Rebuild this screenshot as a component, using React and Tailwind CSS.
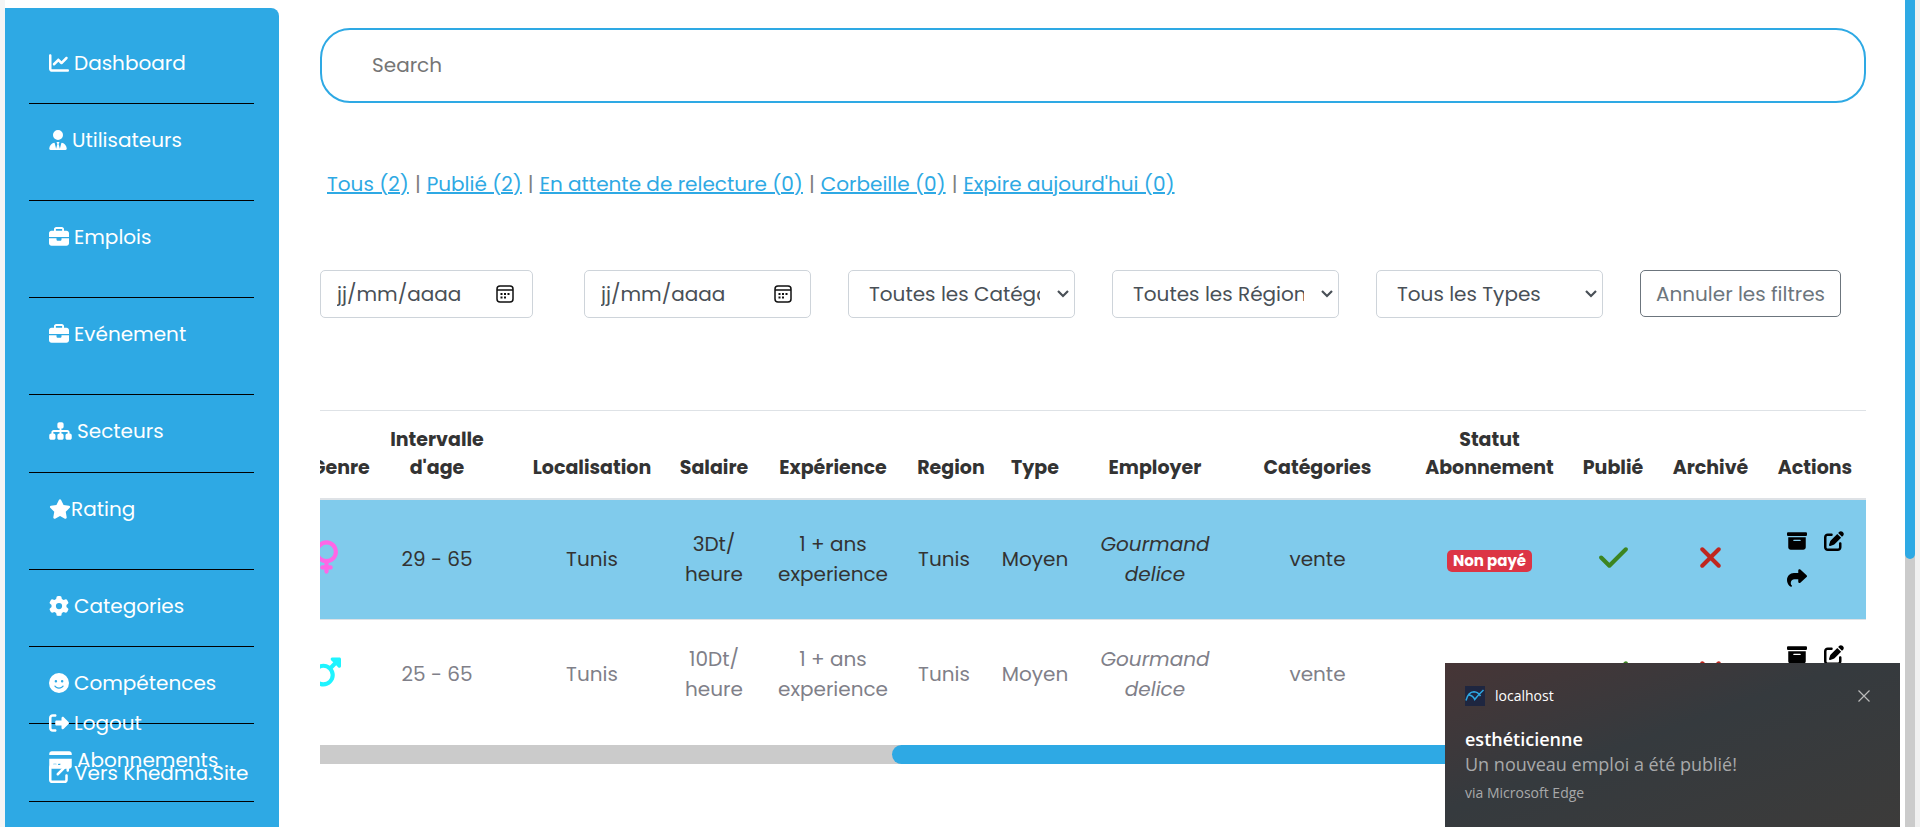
import {
  FaChartLine, FaUserTie, FaBriefcase, FaSitemap, FaStar, FaGear, FaFaceSmile,
  FaRightFromBracket, FaCreditCard, FaArrowUpRightFromSquare, FaVenus, FaMars,
  FaCheck, FaXmark, FaBoxArchive, FaPenToSquare, FaShare,
} from "react-icons/fa6";

const navItems = [
  { label: "Dashboard", Icon: FaChartLine, size: "w-5", gap: "gap-[5px]", height: "h-[77px]" },
  { label: "Utilisateurs", Icon: FaUserTie, size: "w-[18px]", gap: "gap-[5px]", height: "h-[97px]" },
  { label: "Emplois", Icon: FaBriefcase, size: "w-5", gap: "gap-[5px]", height: "h-[97px]" },
  { label: "Evénement", Icon: FaBriefcase, size: "w-5", gap: "gap-[5px]", height: "h-[97px]" },
  { label: "Secteurs", Icon: FaSitemap, size: "w-[23px]", gap: "gap-[5px]", height: "h-[78px]" },
  { label: "Rating", Icon: FaStar, size: "w-[22px]", gap: "gap-0", height: "h-[97px]" },
  { label: "Categories", Icon: FaGear, size: "w-5", gap: "gap-[5px]", height: "h-[77px]" },
  { label: "Compétences", Icon: FaFaceSmile, size: "w-5", gap: "gap-[5px]", height: "h-[77px]" },
  { label: "Abonnements", Icon: FaCreditCard, size: "w-[23px]", gap: "gap-[5px]", height: "h-[78px]" },
];

function NavLink({ label, Icon, size, gap }) {
  return (
    <a href="#" className={`flex items-center pl-5 text-xl leading-[30px] text-white whitespace-nowrap ${gap}`}>
      <Icon className={`h-5 shrink-0 ${size}`} />
      {label}
    </a>
  );
}

function Sidebar() {
  return (
    <aside className="relative mt-2 w-[274px] shrink-0 rounded-tr-lg bg-[#2ea9e4] pt-[19px] pr-[25px] pl-6">
      <nav>
        <ul>
          {navItems.map((item) => (
            <li key={item.label} className={`border-b border-black pt-[21px] ${item.height}`}>
              <NavLink {...item} />
            </li>
          ))}
        </ul>
      </nav>
      <div className="absolute bottom-[39px] left-6 flex flex-col gap-5">
        <NavLink label="Logout" Icon={FaRightFromBracket} size="w-5" gap="gap-[5px]" />
        <NavLink label="Vers Khedma.Site" Icon={FaArrowUpRightFromSquare} size="w-5" gap="gap-[5px]" />
      </div>
    </aside>
  );
}

const statusLinks = ["Tous (2)", "Publié (2)", "En attente de relecture (0)", "Corbeille (0)", "Expire aujourd'hui (0)"];

function CalendarIcon() {
  return (
    <svg viewBox="0 0 18 18" className="size-[18px] shrink-0" fill="none" stroke="#111" strokeWidth="1.5" aria-hidden="true">
      <rect x="1" y="1" width="16" height="16" rx="3" />
      <path d="M1 5h16" />
      <path d="M4.5 9h2M8 9h2M11.5 9h2M4.5 12.500h2M8 12.500h2" strokeWidth="2" />
    </svg>
  );
}

function DateField({ label, width }) {
  return (
    <label className={`flex h-12 items-center rounded-[5px] border border-[#ced4da] pr-[18px] pl-4 ${width}`}>
      <input type="text" aria-label={label} placeholder="jj/mm/aaaa" className="w-full min-w-0 text-xl text-[#495057] outline-none placeholder:text-[#495057]" />
      <CalendarIcon />
    </label>
  );
}

function SelectField({ label }) {
  return (
    <div className="grid h-12 grid-cols-[minmax(0,1fr)] items-center rounded-[5px] border border-[#ced4da]">
      <select aria-label={label} className="col-start-1 row-start-1 mr-[34px] ml-5 min-w-0 appearance-none overflow-hidden bg-transparent text-xl text-[#495057] outline-none">
        <option>{label}</option>
      </select>
      <svg viewBox="0 0 12 8" className="pointer-events-none col-start-1 row-start-1 mr-[5px] w-3 justify-self-end" fill="none" stroke="#495057" strokeWidth="2.2" aria-hidden="true">
        <path d="M1 1l5 5 5-5" />
      </svg>
    </div>
  );
}

function Filters() {
  return (
    <div className="mt-[71px] grid grid-cols-[repeat(5,minmax(0,1fr))_226px] gap-x-[37px]">
      <DateField label="Date de début" width="mr-[14px]" />
      <DateField label="Date de fin" width="" />
      <SelectField label="Toutes les Catégories" />
      <SelectField label="Toutes les Régions" />
      <SelectField label="Tous les Types" />
      <button type="button" className="h-[47px] w-[201px] rounded-[5px] border border-[#6c757d] text-xl whitespace-nowrap text-[#6c757d]">
        Annuler les filtres
      </button>
    </div>
  );
}

const columns = [
  { label: "Genre", width: "w-[58px]" },
  { label: "Intervalle d'age", width: "w-[136px]" },
  { label: "Localisation", width: "w-[174px]" },
  { label: "Salaire", width: "w-[70px]" },
  { label: "Expérience", width: "w-[168px]" },
  { label: "Region", width: "w-[68px]" },
  { label: "Type", width: "w-[100px]" },
  { label: "Employer", width: "w-[140px]" },
  { label: "Catégories", width: "w-[185px]" },
  { label: "Statut Abonnement", width: "w-[159px]" },
  { label: "Publié", width: "w-[88px]" },
  { label: "Archivé", width: "w-[107px]" },
  { label: "Actions", width: "w-[102px]" },
];

const jobs = [
  { id: 1, Genre: FaVenus, genreStyle: "text-[#ff66e6] w-[25px]", age: "29 - 65", salary: "3Dt/", row: "bg-[#80cbec] text-[#333] h-[121px]" },
  { id: 2, Genre: FaMars, genreStyle: "text-[#1ff4ff] w-[29px]", age: "25 - 65", salary: "10Dt/", row: "text-[#808089] h-[108px]" },
];

function JobRow({ job }) {
  const { Genre } = job;
  return (
    <tr className={`border-b border-[#dee2e6] last:border-0 ${job.row}`}>
      <td className="pr-7 pb-1"><div className="flex justify-center"><Genre className={`h-[34px] shrink-0 ${job.genreStyle}`} /></div></td>
      <td>{job.age}</td>
      <td>Tunis</td>
      <td>{job.salary}<br />heure</td>
      <td>1 + ans<br />experience</td>
      <td className="pr-3.5">Tunis</td>
      <td>Moyen</td>
      <td className="italic">Gourmand<br />delice</td>
      <td>vente</td>
      <td>
        <span className="inline-block rounded-[5px] bg-[#dc3545] px-1.5 text-[15px] leading-[22px] font-bold text-white">Non payé</span>
      </td>
      <td className="pb-1"><FaCheck className="mx-auto size-[33px] text-[#3c8521]" /></td>
      <td className="pb-1"><FaXmark className="mx-auto size-[33px] text-[#c0261e]" /></td>
      <td>
        <div className="mx-auto grid w-[57px] grid-cols-2 gap-[17px] text-black">
          <button type="button" aria-label="Archiver"><FaBoxArchive className="size-5" /></button>
          <button type="button" aria-label="Modifier"><FaPenToSquare className="size-5" /></button>
          <button type="button" aria-label="Partager"><FaShare className="size-5" /></button>
        </div>
      </td>
    </tr>
  );
}

function JobsTable() {
  return (
    <div className="mt-[92px]">
      <div className="flex justify-end overflow-hidden">
        <table className="w-[1555px] shrink-0 table-fixed border-t border-[#dee2e6] text-center text-xl leading-[30px]">
          <thead>
            <tr className="h-[88px] border-b-2 border-[#dee2e6] text-[19px] leading-7 text-[#333]">
              {columns.map((c) => (
                <th key={c.label} className={`pb-4 align-bottom font-bold ${c.width}`}>{c.label}</th>
              ))}
            </tr>
          </thead>
          <tbody>{jobs.map((job) => <JobRow key={job.id} job={job} />)}</tbody>
        </table>
      </div>
      <div className="mt-[17px] flex h-[19px] justify-end bg-[#cbcbcb]">
        <div className="w-[63%] rounded-full bg-[#2ea9e4]" />
      </div>
    </div>
  );
}

function Toast() {
  return (
    <section className="fixed right-5 bottom-0 w-[455px] bg-linear-to-br from-[#463536] via-[#353a3e] via-45% to-[#3c3b3a] px-5 pt-[23px] pb-6 font-['Open_Sans',sans-serif]">
      <div className="flex items-center gap-2.5 text-sm leading-5 text-white">
        <svg viewBox="0 0 20 20" className="size-5" aria-hidden="true">
          <rect width="20" height="20" fill="#1e2640" />
          <path d="M1 14.500Q3 6 9 5.700Q13 6 15.500 10M4 9Q8 9.500 9.700 13.500Q13 9 18.500 4" fill="none" stroke="#2ea9e4" strokeWidth="1.500" />
        </svg>
        localhost
        <button type="button" aria-label="Fermer" className="mr-2.5 ml-auto">
          <svg viewBox="0 0 12 12" className="size-3" stroke="#bbb" strokeWidth="1.200"><path d="M.5.5l11 11M11.500.5l-11 11" /></svg>
        </button>
      </div>
      <h2 className="mt-[21px] text-lg leading-[25px] font-semibold text-white">esthéticienne</h2>
      <p className="text-lg leading-[25px] text-[#a8a9aa]">Un nouveau emploi a été publié!</p>
      <p className="mt-1.5 text-sm leading-5 text-[#a8a9aa]">via Microsoft Edge</p>
    </section>
  );
}

export default function App() {
  return (
    <div className="flex h-screen overflow-hidden border-l-[5px] border-[#f5f5f5] bg-white font-['Poppins','Inter',sans-serif]">
      <Sidebar />
      <main className="mr-[39px] ml-[41px] min-w-0 flex-1 pt-7">
        <input type="search" aria-label="Search" placeholder="Search" className="block h-[75px] w-full rounded-[30px] border-2 border-[#2ea9e4] px-[50px] pb-0.5 text-xl outline-none placeholder:text-[#757575]" />
        <nav className="mt-[66px] flex gap-1.5 pl-[7px] text-xl leading-[30px] whitespace-nowrap text-[#808080]">
          {statusLinks.map((label, i) => (
            <span key={label} className="flex gap-1.5">
              {i > 0 && <span>|</span>}
              <a href="#" className="text-[#2ea9e4] underline">{label}</a>
            </span>
          ))}
        </nav>
        <Filters />
        <JobsTable />
      </main>
      <div className="w-[15px] shrink-0 border-r-[5px] border-[#f0f0f0] bg-[#cbcbcb]">
        <div className="h-[559px] rounded-b-full bg-[#2ea9e4]" />
      </div>
      <Toast />
    </div>
  );
}
